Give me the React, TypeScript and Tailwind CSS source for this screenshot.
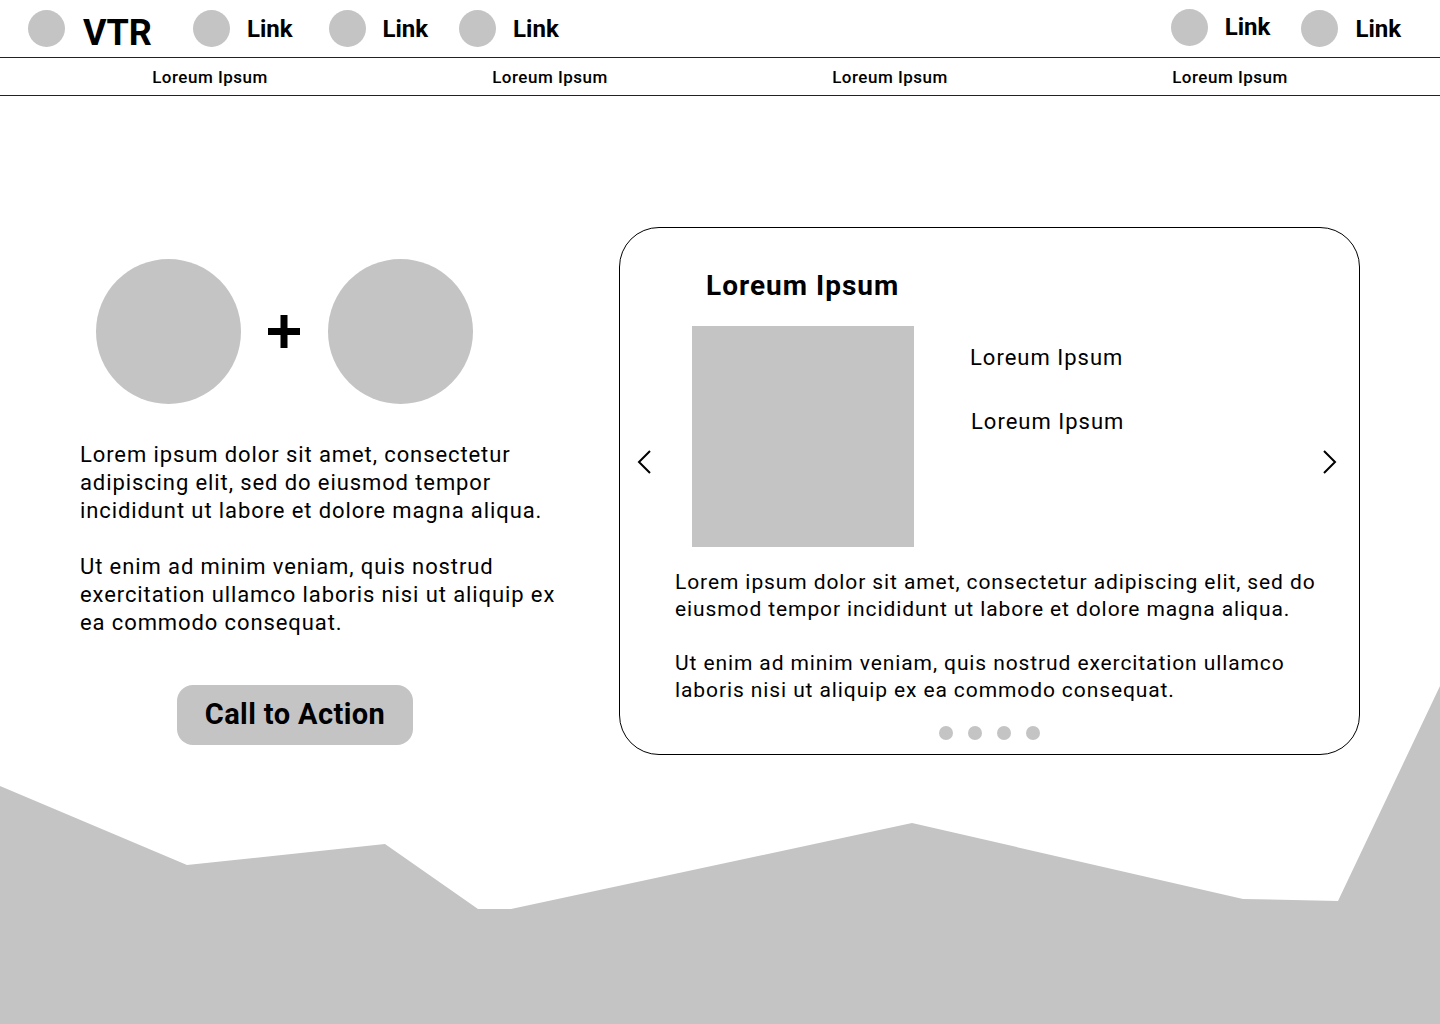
import React from 'react';

const Dot = ({ className = '' }: { className?: string }) => (
  <div className={`rounded-full bg-[#c4c4c4] shrink-0 ${className}`} />
);

const NavLink = ({ className = '' }: { className?: string }) => (
  <div className={`flex items-center ${className}`}>
    <Dot className="w-[37px] h-[37px]" />
    <span className="ml-[17px] text-[24px] font-bold leading-none text-black">Link</span>
  </div>
);

const Chevron = ({ dir }: { dir: 'left' | 'right' }) => (
  <svg width="16" height="26" viewBox="0 0 16 26" fill="none">
    {dir === 'left' ? (
      <polyline points="13,2 2,13 13,24" stroke="#000" strokeWidth="2" strokeLinejoin="miter" />
    ) : (
      <polyline points="3,2 14,13 3,24" stroke="#000" strokeWidth="2" strokeLinejoin="miter" />
    )}
  </svg>
);

export default function App() {
  const subNav = ['Loreum Ipsum', 'Loreum Ipsum', 'Loreum Ipsum', 'Loreum Ipsum'];

  return (
    <div
      className="relative w-[1440px] h-[1024px] overflow-hidden bg-white text-black"
      style={{ fontFamily: 'Roboto, "Noto Sans", sans-serif' }}
    >
      {/* hills in the background */}
      <svg className="absolute inset-0" width="1440" height="1024" viewBox="0 0 1440 1024">
        <polygon
          points="0,786 187,865 385,844 478,909 511,909 912,823 1243,899 1338,901 1440,686 1440,1024 0,1024"
          fill="#c4c4c4"
        />
      </svg>

      <div className="relative z-10">
        {/* top bar */}
        <header className="h-[58px] flex items-center border-b border-[#222] pl-[28px] pr-[39px]">
          <Dot className="w-[37px] h-[37px]" />
          <span className="ml-[18px] mt-[8px] text-[36px] font-bold leading-none">VTR</span>
          <NavLink className="ml-[41px]" />
          <NavLink className="ml-[36px]" />
          <NavLink className="ml-[31px]" />
          <div className="flex-1" />
          <NavLink className="-mt-[3px]" />
          <NavLink className="ml-[31px]" />
        </header>

        <nav className="h-[38px] grid grid-cols-4 px-[40px] pt-[3px] border-b border-[#222]">
          {subNav.map((item, i) => (
            <div key={i} className="flex items-center justify-center text-[17px] font-medium tracking-[0.5px]">
              {item}
            </div>
          ))}
        </nav>

        <main className="flex pl-[80px] pt-[131px]">
          {/* left hero */}
          <section className="w-[480px] pt-[32px]">
            <div className="flex items-center pl-[16px]">
              <Dot className="w-[145px] h-[145px]" />
              <svg className="ml-[27px]" width="32" height="33" viewBox="0 0 32 33">
                <rect x="12.5" y="0" width="7" height="33" fill="#000" />
                <rect x="0" y="13" width="32" height="7" fill="#000" />
              </svg>
              <Dot className="ml-[28px] w-[145px] h-[145px]" />
            </div>

            <div className="mt-[37px] w-[490px] text-[22px] leading-[28px] tracking-[0.9px]">
              <p>
                Lorem ipsum dolor sit amet, consectetur adipiscing elit, sed do eiusmod tempor
                incididunt ut labore et dolore magna aliqua.
              </p>
              <p className="mt-[28px]">
                Ut enim ad minim veniam, quis nostrud exercitation ullamco laboris nisi ut aliquip ex
                ea commodo consequat.
              </p>
            </div>

            <button className="mt-[48px] ml-[97px] w-[236px] h-[60px] rounded-[16px] bg-[#c4c4c4] text-[29px] font-bold tracking-[0.4px] text-black">
              Call to Action
            </button>
          </section>

          {/* carousel card */}
          <section className="relative ml-[59px] w-[741px] h-[528px] rounded-[40px] border border-black bg-white flex flex-col">
            <h2 className="mt-[41px] pl-[86px] text-[28px] font-bold leading-[33px] tracking-[1px]">
              Loreum Ipsum
            </h2>

            <div className="mt-[24px] pl-[72px] flex">
              <div className="w-[222px] h-[221px] bg-[#c4c4c4]" />
              <div className="ml-[56px] mt-[19px] text-[22px] leading-[26px] tracking-[1px]">
                <p>Loreum Ipsum</p>
                <p className="mt-[38px] ml-[1px]">Loreum Ipsum</p>
              </div>
            </div>

            <div className="absolute left-[17px] top-[221px]">
              <Chevron dir="left" />
            </div>
            <div className="absolute right-[22px] top-[221px]">
              <Chevron dir="right" />
            </div>

            <div className="mt-[22px] pl-[55px] w-[710px] text-[21px] leading-[27px] tracking-[0.9px]">
              <p>
                Lorem ipsum dolor sit amet, consectetur adipiscing elit, sed do eiusmod tempor
                incididunt ut labore et dolore magna aliqua.
              </p>
              <p className="mt-[27px]">
                Ut enim ad minim veniam, quis nostrud exercitation ullamco laboris nisi ut aliquip ex
                ea commodo consequat.
              </p>
            </div>

            <div className="mt-[22px] flex justify-center gap-[15px]">
              <Dot className="w-[14px] h-[14px]" />
              <Dot className="w-[14px] h-[14px]" />
              <Dot className="w-[14px] h-[14px]" />
              <Dot className="w-[14px] h-[14px]" />
            </div>
          </section>
        </main>
      </div>
    </div>
  );
}
